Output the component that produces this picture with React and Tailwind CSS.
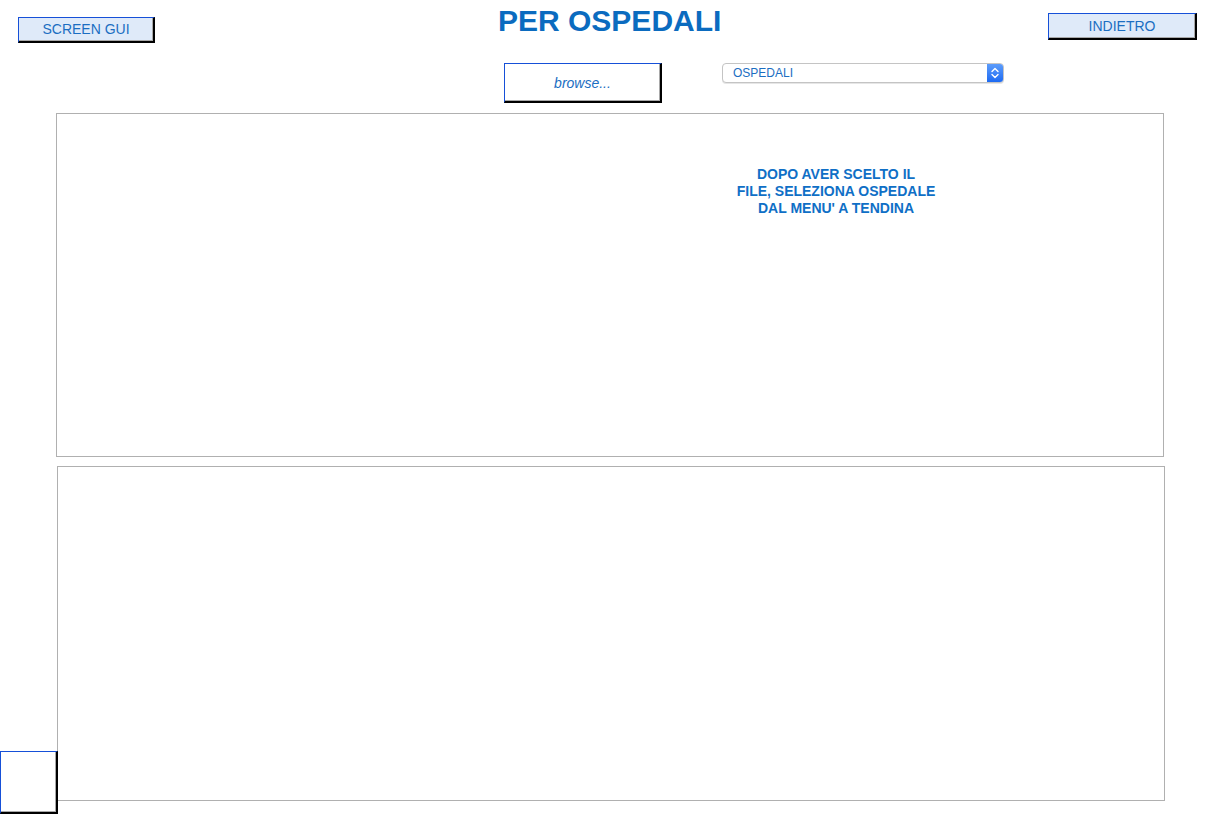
import React from "react";

// pulsante stile GUI: bordo blu in alto/sinistra, nero in basso/destra
function GuiButton({ label, className = "" }) {
  return (
    <button
      className={`flex items-center justify-center bg-[#dfeaf9] text-[14px] text-[#1b6ec2] border-t border-l border-[#1650d8] border-r-2 border-b-2 border-r-black border-b-black shadow-[inset_-1px_-1px_0_#a8a8a8] ${className}`}>
      {label}
    </button>
  );
}

function Chevrons() {
  return (
    <svg width="10" height="14" viewBox="0 0 10 14" fill="none">
      <path d="M2 5.5 L5 2.5 L8 5.5" stroke="white" strokeWidth="1.4" strokeLinecap="round" strokeLinejoin="round" />
      <path d="M2 8.5 L5 11.5 L8 8.5" stroke="white" strokeWidth="1.4" strokeLinecap="round" strokeLinejoin="round" />
    </svg>
  );
}

export default function App() {
  return (
    <main
      className="relative w-[1225px] h-[814px] bg-white overflow-hidden"
      style={{ fontFamily: '"Liberation Sans", Arial, sans-serif' }}>
      {/* Intestazione */}
      <div className="flex items-start h-[63px]">
        <div className="w-[498px] pl-[18px] pt-[17px]">
          <GuiButton label="SCREEN GUI" className="w-[137px] h-[26px]" />
        </div>
        <h1 className="w-[222px] mt-[4px] text-center text-[30px] leading-[34px] font-bold text-[#0b6bbf] whitespace-nowrap">
          PER OSPEDALI
        </h1>
        <div className="flex-1 flex justify-end pr-[28px] pt-[13px]">
          <GuiButton label="INDIETRO" className="w-[149px] h-[27px]" />
        </div>
      </div>

      {/* Riga file / menu */}
      <div className="flex items-start h-[50px]">
        <button className="ml-[504px] w-[158px] h-[40px] pt-[2px] bg-white italic text-[14px] text-[#1b6ec2] border-t border-l border-[#1650d8] border-r-2 border-b-2 border-r-black border-b-black shadow-[inset_-1px_-1px_0_#a8a8a8]">
          browse...
        </button>
        <div className="ml-[60px] w-[282px] h-[20px] flex items-stretch rounded-[4px] border border-[#c4c4c4] bg-white overflow-hidden shadow-[0_1px_0_#e6e6e6]">
          <span className="flex-1 pl-[10px] text-[12px] leading-[19px] text-[#1b6ec2]">
            OSPEDALI
          </span>
          <span className="w-[16px] flex items-center justify-center bg-gradient-to-b from-[#5c9cfb] to-[#1c6af2]">
            <Chevrons />
          </span>
        </div>
      </div>

      {/* Pannello superiore */}
      <section className="ml-[56px] w-[1108px] h-[344px] border border-[#b0b0b0] flex justify-end">
        <p className="mt-[52px] mr-[217px] w-[220px] text-center text-[14px] leading-[17px] font-bold text-[#0f6fc6]">
          DOPO AVER SCELTO IL
          <br />
          FILE, SELEZIONA OSPEDALE
          <br />
          DAL MENU' A TENDINA
        </p>
      </section>

      {/* Pannello inferiore */}
      <section className="mt-[9px] ml-[57px] w-[1108px] h-[335px] border border-[#b0b0b0]" />

      {/* riquadro in basso a sinistra */}
      <div className="absolute left-0 top-[751px] w-[58px] h-[63px] bg-white border-t border-l border-[#1650d8] border-r-2 border-b-2 border-r-black border-b-black shadow-[inset_-1px_-1px_0_#a8a8a8]" />
    </main>
  );
}
